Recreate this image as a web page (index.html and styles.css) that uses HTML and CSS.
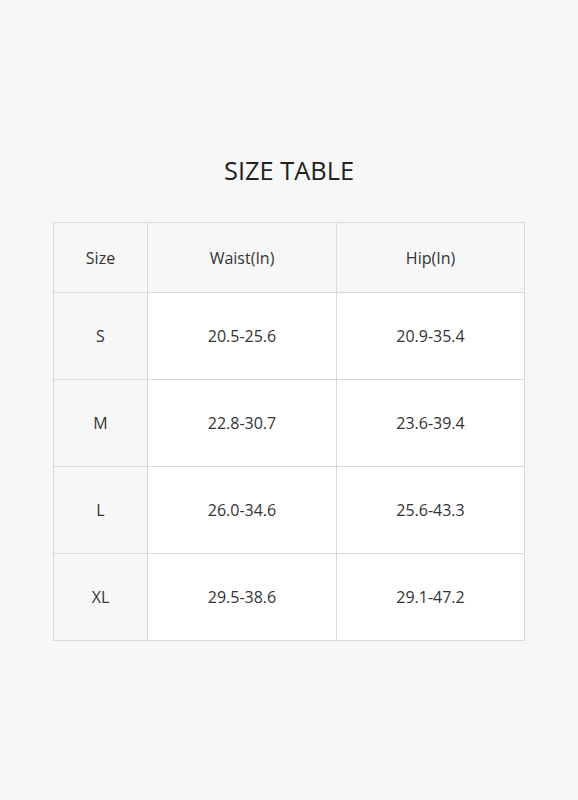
FILE: index.html
```html
<!DOCTYPE html>
<html>
<head>
<meta charset="utf-8">
<link rel="stylesheet" href="styles.css">
</head>
<body>
<div class="page">
  <h1 class="title">SIZE TABLE</h1>
  <table class="size-table">
    <tr class="head"><td class="c1">Size</td><td class="c2">Waist(In)</td><td class="c3">Hip(In)</td></tr>
    <tr><td class="c1">S</td><td>20.5-25.6</td><td>20.9-35.4</td></tr>
    <tr><td class="c1">M</td><td>22.8-30.7</td><td>23.6-39.4</td></tr>
    <tr><td class="c1">L</td><td>26.0-34.6</td><td>25.6-43.3</td></tr>
    <tr><td class="c1">XL</td><td>29.5-38.6</td><td>29.1-47.2</td></tr>
  </table>
</div>
</body>
</html>
```
FILE: styles.css
```css
html, body {
  margin: 0;
  padding: 0;
  background: #f7f7f7;
}
.page {
  width: 578px;
  height: 800px;
  padding-top: 152px;
  box-sizing: border-box;
  font-family: "Open Sans", sans-serif;
}
.title {
  margin: 0;
  text-align: center;
  font-weight: 400;
  font-size: 25.4px;
  line-height: 36px;
  color: #222;
}
.size-table {
  margin: 34px 0 0 53px;
  border-collapse: collapse;
  width: 472px;
  table-layout: fixed;
}
.size-table td {
  border: 1px solid #d9d9d9;
  background: #fff;
  text-align: center;
  vertical-align: middle;
  height: 86px;
  padding: 0;
  font-size: 16px;
  color: #333;
}
.size-table td.c1 {
  width: 93px;
  background: #f7f7f7;
}
.size-table td.c2 {
  width: 188px;
}
.size-table .head td {
  height: 69px;
  background: #f7f7f7;
}
```
